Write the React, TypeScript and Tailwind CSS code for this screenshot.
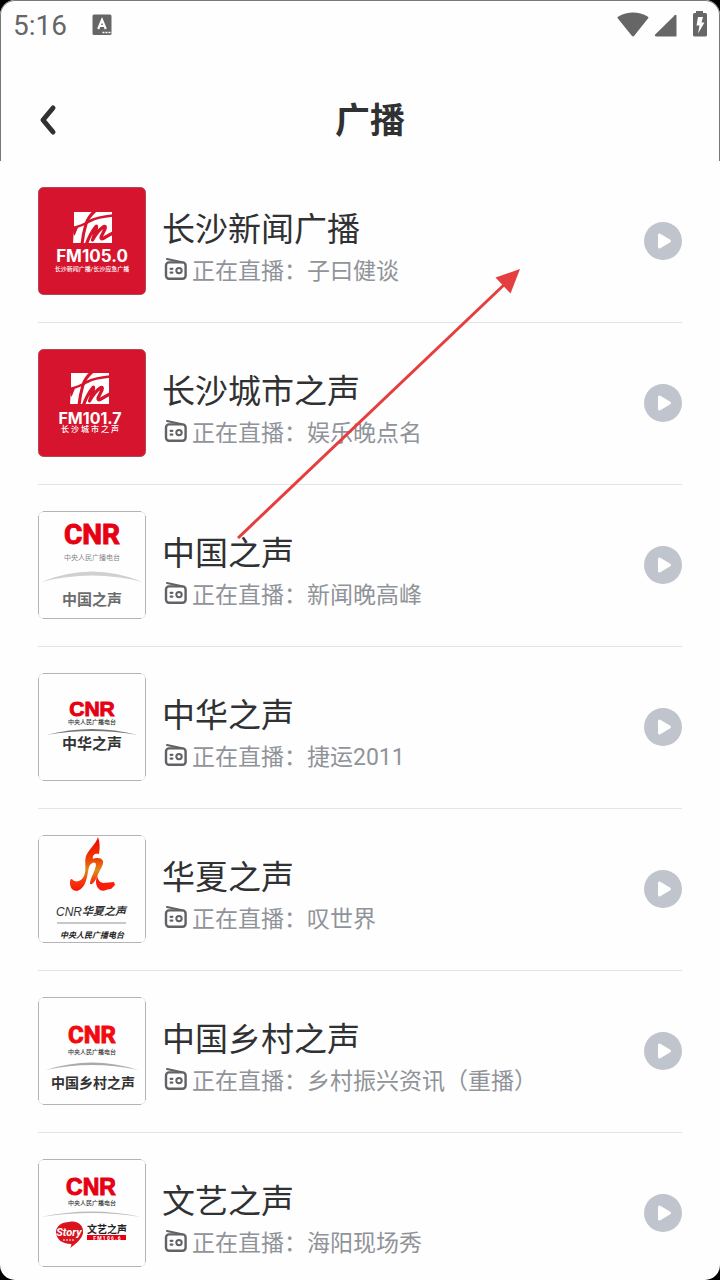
import type { ReactNode } from "react";

type Station = { name: string; show: string; cover: ReactNode };

const CJK = "Roboto, 'Noto Sans CJK SC', sans-serif";
const SANS = "Roboto, 'Noto Sans CJK SC', sans-serif";
const RED = "#e60012";

type LabelProps = {
  y: number;
  size: number;
  fill: string;
  children: string;
  x?: number;
  weight?: number;
  family?: string;
  italic?: boolean;
  heavy?: boolean;
};

function Label({ x = 54, y, size, fill, weight = 700, family = SANS, italic, heavy, children }: LabelProps) {
  return (
    <text
      x={x}
      y={y}
      fontSize={size}
      fill={fill}
      stroke={heavy ? fill : "none"}
      fontWeight={weight}
      fontFamily={family}
      fontStyle={italic ? "italic" : "normal"}
      textAnchor="middle"
    >
      {children}
    </text>
  );
}

function Cover({ label, red, children }: { label: string; red?: boolean; children: ReactNode }) {
  return (
    <svg viewBox="0 0 108 108" className="size-[108px] shrink-0" role="img" aria-label={label}>
      {red ? (
        <rect x="0.5" y="0.5" width="107" height="107" rx="5" fill="#d7142d" stroke="#b0485a" />
      ) : (
        <g fill="none">
          <path d="M5 .5H103M5 107.5H103M.5 5V103M107.5 5V103" stroke="#b4b4b4" />
          <path d="M.5 5Q1 1 5 .5M103 .5Q107 1 107.5 5M107.5 103Q107 107 103 107.5M5 107.5Q1 107 .5 103" stroke="#e6e6e6" />
        </g>
      )}
      {children}
    </svg>
  );
}

function FmMark() {
  return (
    <g>
      <path d="M1 0H39V31H0L1 16Z" fill="#fff" />
      <g fill="none" stroke="#d7142d" strokeLinejoin="round">
        <path d="M-1 16Q9 14 17 9Q24 5 40 3.500" strokeWidth="2.600" />
        <path d="M22-1Q15 5 13 12Q10 22 9 32" strokeWidth="3" />
        <path d="M-2 15L5 15.500L1.500 24Z" fill="#d7142d" stroke="none" />
        <path d="M13.500 32Q17 22 22.500 15Q24 13 23.500 16L19.500 28Q25 18 31 14.500Q33 13.500 32 17L28 25Q27.500 28 31 26Q36 23 40 21" strokeWidth="3.200" />
      </g>
    </g>
  );
}

const stations: Station[] = [
  {
    name: "长沙新闻广播",
    show: "子曰健谈",
    cover: (
      <Cover label="FM105.0" red>
        <g transform="translate(35 25)"><FmMark /></g>
        <Label y={75} size={17} fill="#fff" family="Inter, sans-serif">FM105.0</Label>
        <Label y={84} size={6} fill="#fff" weight={500}>长沙新闻广播/长沙应急广播</Label>
      </Cover>
    ),
  },
  {
    name: "长沙城市之声",
    show: "娱乐晚点名",
    cover: (
      <Cover label="FM101.7" red>
        <g transform="translate(32 24)"><FmMark /></g>
        <Label x={52} y={75} size={16} fill="#fff" family="Inter, sans-serif">FM101.7</Label>
        <Label x={52} y={83} size={8} fill="#fff" weight={500}>长 沙 城 市 之 声</Label>
      </Cover>
    ),
  },
  {
    name: "中国之声",
    show: "新闻晚高峰",
    cover: (
      <Cover label="CNR 中国之声">
        <Label y={33} size={28} fill={RED} heavy>CNR</Label>
        <Label y={49} size={7} fill="#888" weight={400}>中央人民广播电台</Label>
        <path d="M3 71Q54 50 105 71Q54 58 3 71Z" fill="#d0d0d0" />
        <Label y={94} size={15} fill="#6c6c6c">中国之声</Label>
      </Cover>
    ),
  },
  {
    name: "中华之声",
    show: "捷运2011",
    cover: (
      <Cover label="CNR 中华之声">
        <Label y={43} size={21} fill={RED} family="'Liberation Sans', sans-serif" heavy>CNR</Label>
        <Label y={51} size={6} fill="#333" weight={500}>中央人民广播电台</Label>
        <path d="M8 62Q54 50 100 62Q54 54 8 62Z" fill="#777" />
        <Label y={76} size={15} fill="#333">中华之声</Label>
      </Cover>
    ),
  },
  {
    name: "华夏之声",
    show: "叹世界",
    cover: (
      <Cover label="CNR 华夏之声">
        <defs>
          <linearGradient id="flame" x1="0" y1="0" x2="0" y2="1">
            <stop offset="0" stopColor="#f00000" />
            <stop offset="0.4" stopColor="#f03c00" />
            <stop offset="0.62" stopColor="#e08a18" />
            <stop offset="0.8" stopColor="#f04010" />
            <stop offset="1" stopColor="#ff1000" />
          </linearGradient>
        </defs>
        <path
          d="M60 2C58 9 51 14 48 21C46 28 49 33 46 41C44 46 38 48 35 45C33 43 32 44 32 48C32 53 35 56 39 56C49 53 49 40 51 32C53 27 58 26 58 30C57 37 52 43 52 49C55 50 57 46 59 42C61 36 66 30 65 26C63 22 57 23 55 24C54 20 57 18 61 19C62 13 62 7 60 2Z"
          fill="url(#flame)"
        />
        <path d="M59 41C60 44 61 47 65 48C69 48 73 47 76 47L77 50L73 54C69 54 66 57 62 55C58 52 57 47 59 41Z" fill="#fa1e0a" />
        <Label x={31} y={81} size={12} fill="#333" weight={400} family="'Liberation Sans', sans-serif" italic>CNR</Label>
        <Label x={66} y={80} size={11} fill="#333" italic>华夏之声</Label>
        <path d="M19 88H88" stroke="#c8c8c8" strokeWidth="2" />
        <Label y={103} size={8} fill="#222" italic>中央人民广播电台</Label>
      </Cover>
    ),
  },
  {
    name: "中国乡村之声",
    show: "乡村振兴资讯（重播）",
    cover: (
      <Cover label="CNR 中国乡村之声">
        <Label y={46} size={24} fill="#f30a10" heavy>CNR</Label>
        <Label y={57} size={6} fill="#333" weight={500}>中央人民广播电台</Label>
        <path d="M8 73Q54 58 100 73Q54 63 8 73Z" fill="#aaa" />
        <Label x={55} y={91} size={14} fill="#333">中国乡村之声</Label>
      </Cover>
    ),
  },
  {
    name: "文艺之声",
    show: "海阳现场秀",
    cover: (
      <Cover label="CNR 文艺之声">
        <Label x={53} y={36} size={23} fill={RED} family="'Liberation Sans', sans-serif" heavy>CNR</Label>
        <Label x={54} y={46} size={6} fill="#333" weight={500}>中央人民广播电台</Label>
        <path d="M3 58Q54 47 103 58Q54 50 3 58Z" fill="#bbb" />
        <path d="M31 63C40 61 46 67 45 74C44 80 38 85 32 89Q34 86 33 85C24 85 18 80 18 73C18 67 24 63 31 63Z" fill="#d9141e" />
        <Label x={31} y={77} size={11} fill="#fff" italic>Story</Label>
        <path d="M25 81H37" stroke="#fff" strokeWidth="1" strokeDasharray="2 1" />
        <Label x={69} y={74} size={10} fill="#222">文艺之声</Label>
        <path d="M49 76H88V81H49Z" fill={RED} />
        <Label x={69} y={81} size={5} fill="#fff">F M 1 0 6 . 6</Label>
      </Cover>
    ),
  },
];

function RadioIcon() {
  return (
    <svg viewBox="0 0 25 24" className="mb-1.5 h-6 w-[25px] shrink-0" fill="none" stroke="#606266" strokeLinecap="round" aria-hidden="true">
      <rect x="4" y="5.400" width="19.600" height="16.400" rx="3" strokeWidth="2.400" />
      <path d="M5 2L20 5.200" strokeWidth="2" />
      <circle cx="17" cy="13.600" r="2.700" strokeWidth="2" />
      <path d="M8.600 11.800H10.400M8.600 15.600H10.400" strokeWidth="2.200" />
    </svg>
  );
}

function StatusBar() {
  return (
    <div className="flex h-12 items-center px-3">
      <time className="w-[55px] pt-0.5 text-[28px] leading-8 text-[#666]">5:16</time>
      <svg viewBox="0 0 20 22" className="ml-6 h-[22px] w-5" aria-hidden="true">
        <rect x="0.5" y="0.5" width="19" height="20.5" rx="1.5" fill="#666" />
        <path d="M6.2 15L10 5.8L13.8 15M7.6 12H12.4" fill="none" stroke="#fff" strokeWidth="2.2" />
        <path d="M10.5 18.5H12.5M13.5 18.5H15.5M16.5 18.5H18.5" stroke="#fff" strokeWidth="1.6" />
      </svg>
      <svg viewBox="0 0 90 28" className="ml-auto h-7 w-[90px]" fill="#666" aria-hidden="true">
        <path d="M.7 7.3Q0 6.5 1 5.8Q16-2.6 31 5.8Q31.8 6.5 31.2 7.3L17.2 24.8Q16 26 14.8 24.8Z" />
        <path d="M59.5 4.8V25.500H39Q37 25 38.2 23.500L57.8 4.200Q59.2 3.200 59.5 4.8Z" />
        <path d="M79 0H86V2H88.5Q90 2 90 3.500V24Q90 25.500 88.5 25.500H77.500Q76 25.500 76 24V3.500Q76 2 77.500 2H79Z" />
        <path d="M81 6H86L84.500 11.500H87.500L81 22.500L82.500 14.500H79.500Z" fill="#fff" />
      </svg>
    </div>
  );
}

function StationRow({ station }: { station: Station }) {
  return (
    <li className="flex items-center border-b border-[#e4e4e6] pt-[26px] pb-[27px] last:border-0 last:pb-[13px]">
      {station.cover}
      <div className="ml-4 min-w-0 flex-1 self-start pt-[23px]">
        <h2 className="text-[33px] leading-10 text-[#303133]">{station.name}</h2>
        <p className="mt-1 flex items-center gap-[5px] text-[23px] leading-9 text-[#909399]">
          <RadioIcon />
          <span>正在直播：{station.show}</span>
        </p>
      </div>
      <button type="button" aria-label={`播放${station.name}`} className="size-[38px] shrink-0 rounded-full bg-[#c0c4cc]">
        <svg viewBox="0 0 38 38" className="size-full" aria-hidden="true">
          <path d="M15.500 13V25L25.500 19Z" fill="#fff" stroke="#fff" strokeWidth="3" strokeLinejoin="round" />
        </svg>
      </button>
    </li>
  );
}

export default function App() {
  return (
    <div lang="zh-CN" className="min-h-screen bg-black" style={{ fontFamily: CJK }}>
      <div className="relative min-h-screen overflow-hidden rounded-[15px] bg-[#fefefe]">
        <header className="rounded-t-[15px] border border-b-0 border-[#777] pb-1.5">
          <StatusBar />
          <div className="mt-9 flex items-center px-[37px]">
            <button type="button" aria-label="返回" className="flex h-[70px] w-5 items-center">
              <svg viewBox="0 0 20 36" className="h-9 w-5" aria-hidden="true">
                <path d="M15 6L5 18L15 30" fill="none" stroke="#303133" strokeWidth="5" strokeLinecap="round" strokeLinejoin="round" />
              </svg>
            </button>
            <h1 className="flex-1 pt-1 text-center text-[35px] leading-[48px] font-bold text-[#303133]">广播</h1>
          </div>
        </header>
        <main>
          <ul className="px-[38px]">
            {stations.map((station) => (
              <StationRow key={station.name} station={station} />
            ))}
          </ul>
        </main>
        <svg viewBox="0 0 284 270" className="pointer-events-none absolute top-[269px] left-[237px] h-[270px] w-[284px]" aria-hidden="true">
          <path d="M1 269L270 13" stroke="#e53e3e" strokeWidth="3" />
          <path d="M283 0L258.500 8.500L273.500 24.500Z" fill="#e53e3e" />
        </svg>
      </div>
    </div>
  );
}
